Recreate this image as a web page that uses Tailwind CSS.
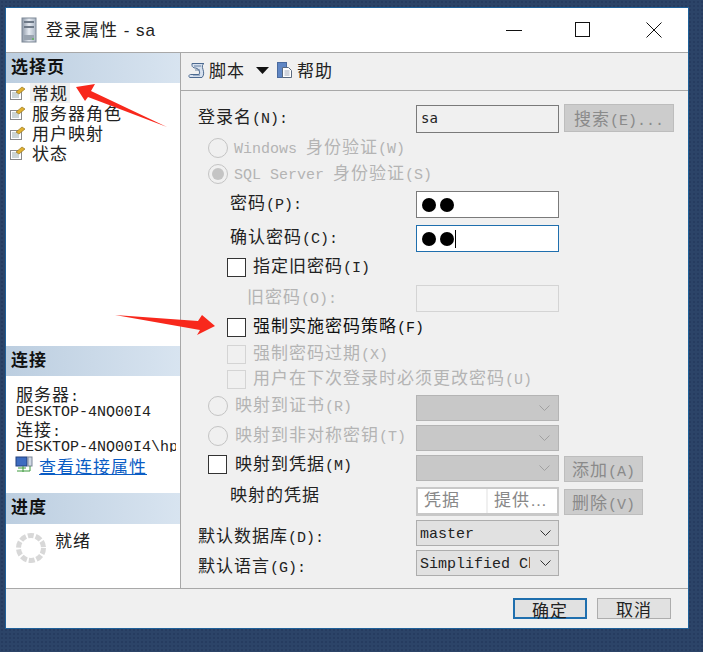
<!DOCTYPE html>
<html lang="zh-CN">
<head>
    <meta charset="UTF-8">
    <title>登录属性 - sa</title>
    <script src="https://cdn.jsdelivr.net/npm/@tailwindcss/browser@4"></script>
</head>
<body class="w-[703px] h-[652px] overflow-hidden bg-[#2c4468] bg-[radial-gradient(#263c60_1px,transparent_1px)] bg-[length:4px_4px] font-['Noto_Sans_CJK_SC',sans-serif] text-[17px] leading-[20px] tracking-[1px] text-[#1a1a1a]">

<div class="relative ml-[5px] mt-[7px] w-[684px] h-[622px] border border-[#1f6099] bg-[#f0f0f0] flex flex-col">

    <!-- title bar -->
    <div class="h-[45px] shrink-0 bg-white border-b border-[#a8a8a8] flex items-center">
        <svg class="ml-[15px] w-[16px] h-[26px]" viewBox="0 0 16 26">
            <defs><linearGradient id="srv" x1="0" x2="1" y1="0" y2="0"><stop offset="0" stop-color="#8e99a8"/><stop offset=".5" stop-color="#e6ebf2"/><stop offset="1" stop-color="#aab4c2"/></linearGradient></defs>
            <rect x="1" y="1" width="14" height="24" fill="url(#srv)" stroke="#7d8896"/>
            <rect x="3" y="4" width="10" height="2" fill="#6f7a88"/>
            <rect x="3" y="9" width="10" height="2" fill="#6f7a88"/>
            <rect x="3" y="18" width="10" height="5" fill="#9aa4b0"/>
            <rect x="11" y="21" width="2" height="2" fill="#6fb070"/>
        </svg>
        <span class="ml-[9px] text-[#222]">登录属性<span class="font-['Liberation_Sans']"> - sa</span></span>
        <div class="ml-auto flex items-center">
            <svg class="w-[16px] h-[16px] mr-[53px]" viewBox="0 0 16 16"><path d="M0 8.500H16" stroke="#111"/></svg>
            <svg class="w-[16px] h-[16px] mr-[55px]" viewBox="0 0 16 16"><rect x=".5" y=".5" width="14" height="14" fill="none" stroke="#111"/></svg>
            <svg class="w-[16px] h-[16px] mr-[26px]" viewBox="0 0 16 16"><path d="M.5.500L15.500 15.500M15.500.500L.5 15.500" stroke="#111"/></svg>
        </div>
    </div>

    <div class="flex-1 flex min-h-0">
        <!-- left panel -->
        <div class="w-[175px] shrink-0 bg-white border-r border-[#a8a8a8] flex flex-col">
            <div class="h-[30px] shrink-0 bg-gradient-to-r from-[#bccee0] to-[#d8e4f0] pl-[5px] pt-[3px] font-bold text-[#111]">选择页</div>
            <ul class="h-[263px] shrink-0 text-[#222]">
                <li class="h-[20px] flex items-center"><svg class="ml-[4px] w-[16px] h-[14px]" viewBox="0 0 16 14"><rect x=".5" y="4.500" width="11" height="9" fill="#fff" stroke="#8a8a8a"/><path d="M2 7h6M2 9h7M2 11h7" stroke="#9aa"/><path d="M6 6L12 1l3 2-6 5z" fill="#e0b030" stroke="#8a6a10" stroke-width=".6"/></svg><span class="ml-[4px] px-[2px] h-[20px] bg-[#f0f0f0] whitespace-nowrap">常规</span></li>
                <li class="h-[20px] flex items-center"><svg class="ml-[4px] w-[16px] h-[14px]" viewBox="0 0 16 14"><rect x=".5" y="4.500" width="11" height="9" fill="#fff" stroke="#8a8a8a"/><path d="M2 7h6M2 9h7M2 11h7" stroke="#9aa"/><path d="M6 6L12 1l3 2-6 5z" fill="#e0b030" stroke="#8a6a10" stroke-width=".6"/></svg><span class="ml-[6px]">服务器角色</span></li>
                <li class="h-[20px] flex items-center"><svg class="ml-[4px] w-[16px] h-[14px]" viewBox="0 0 16 14"><rect x=".5" y="4.500" width="11" height="9" fill="#fff" stroke="#8a8a8a"/><path d="M2 7h6M2 9h7M2 11h7" stroke="#9aa"/><path d="M6 6L12 1l3 2-6 5z" fill="#e0b030" stroke="#8a6a10" stroke-width=".6"/></svg><span class="ml-[6px]">用户映射</span></li>
                <li class="h-[20px] flex items-center"><svg class="ml-[4px] w-[16px] h-[14px]" viewBox="0 0 16 14"><rect x=".5" y="4.500" width="11" height="9" fill="#fff" stroke="#8a8a8a"/><path d="M2 7h6M2 9h7M2 11h7" stroke="#9aa"/><path d="M6 6L12 1l3 2-6 5z" fill="#e0b030" stroke="#8a6a10" stroke-width=".6"/></svg><span class="ml-[6px]">状态</span></li>
            </ul>
            <div class="h-[30px] shrink-0 bg-gradient-to-r from-[#bccee0] to-[#d8e4f0] pl-[5px] pt-[3px] font-bold text-[#111]">连接</div>
            <div class="h-[78px] shrink-0 pl-[10px] pt-[9px] text-[#222]">
                <div class="h-[17.500px] leading-[18px]">服务器<span class="font-['Liberation_Mono'] text-[15px] tracking-normal">:</span></div>
                <div class="h-[14px] mb-[3.500px] overflow-hidden font-['Liberation_Mono'] text-[15px] tracking-normal leading-[20px]">DESKTOP-4NQ00I4</div>
                <div class="h-[17.500px] leading-[18px]">连接<span class="font-['Liberation_Mono'] text-[15px] tracking-normal">:</span></div>
                <div class="h-[14px] w-[160px] overflow-hidden font-['Liberation_Mono'] text-[15px] tracking-normal leading-[20px] whitespace-nowrap">DESKTOP-4NQ00I4\hp</div>
            </div>
            <div class="h-[39px] shrink-0 flex items-start pt-[2px]">
                <svg class="ml-[9px] w-[18px] h-[17px]" viewBox="0 0 18 17"><rect x="1" y="1" width="11" height="9" fill="#3d6cc0" stroke="#23407e"/><rect x="13" y="1" width="4" height="9" fill="#d0d8e4" stroke="#7a8698"/><path d="M3 12h8M8 10v6M2 15h13M15 10v5" stroke="#3d9a3d" fill="none"/></svg>
                <a class="ml-[6px] text-[#0a5cc4] underline whitespace-nowrap">查看连接属性</a>
            </div>
            <div class="h-[31px] shrink-0 bg-gradient-to-r from-[#bccee0] to-[#d8e4f0] pl-[5px] pt-[3px] font-bold text-[#111]">进度</div>
            <div class="flex-1 flex items-start pl-[10px] pt-[6px] text-[#222]">
                <svg class="w-[30px] h-[30px] mt-[3px]" viewBox="0 0 30 30"><circle cx="15" cy="15" r="12.500" fill="none" stroke="#d8d8d8" stroke-width="5" stroke-dasharray="6 1.900"/></svg>
                <span class="ml-[9px]">就绪</span>
            </div>
        </div>

        <!-- right panel -->
        <div class="flex-1 flex flex-col min-w-0">
            <div class="h-[38px] shrink-0 border-b border-[#a8a8a8] flex items-center pl-[7px] pb-[3px] text-[#222]">
                <svg class="w-[17px] h-[17px]" viewBox="0 0 17 17"><path d="M4 1.500h12c-2 1-2 3-1 6s1 6-1 8H2c-1.500 0-1.500-3 .5-3H10c2 0 2-2 1-4S8 6 7 6 4 5 4 3.500z" fill="#d6e0ee" stroke="#4d6a90"/><path d="M6 4h7M7 8h5M5 13h7" stroke="#4d6a90" stroke-width=".8"/></svg>
                <span class="ml-[4px]">脚本</span>
                <svg class="ml-[11px] w-[13px] h-[7px]" viewBox="0 0 13 7"><path d="M0 0h13L6.500 7z" fill="#111"/></svg>
                <svg class="ml-[8px] w-[15px] h-[16px]" viewBox="0 0 15 16"><rect x=".5" y=".5" width="9" height="15" fill="#5f86c4" stroke="#4a6a9e"/><path d="M5.500 5.500h6l3 3v7h-9z" fill="#fff" stroke="#5a6a80"/><path d="M7.500 9h5M7.500 11h5M7.500 13h5" stroke="#8a96a8" stroke-width=".8"/></svg>
                <span class="ml-[5px]">帮助</span>
            </div>

            <!-- form: right panel starts at x=181, so a label at 198 is pl-[17px] -->
            <div class="flex-1 flex flex-col min-h-0 pt-[14px] pl-[17px] relative">
                <div class="h-[28px] flex items-start">
                    <span class="w-[218px] text-[#222] pt-[1px]">登录名<span class="font-['Liberation_Mono'] text-[15px] tracking-normal">(N):</span></span>
                    <div class="w-[143px] h-[28px] border border-[#7a7a7a] bg-[#f0f0f0] pl-[4px] font-['DejaVu_Sans_Mono'] text-[14px] tracking-normal leading-[24px] text-[#222]">sa</div>
                    <div class="ml-[5px] -mt-[1px] w-[110px] h-[28px] border border-[#bdbdbd] bg-[#cccccc] text-center text-[#8a8a8a] leading-[25px]">搜索<span class="font-['Liberation_Mono'] text-[15px] tracking-normal">(E)...</span></div>
                </div>

                <div class="h-[26px] mt-[2px] flex items-center text-[#b4b4b4]">
                    <span class="ml-[10px] w-[20px] h-[20px] rounded-full border border-[#c4c4c4] bg-[#f0f0f0]"></span>
                    <span class="ml-[6px]"><span class="font-['Liberation_Mono'] text-[15px] tracking-normal">Windows </span>身份验证<span class="font-['Liberation_Mono'] text-[15px] tracking-normal">(W)</span></span>
                </div>
                <div class="h-[26px] flex items-center text-[#b4b4b4]">
                    <span class="ml-[10px] w-[20px] h-[20px] rounded-full border border-[#c4c4c4] flex items-center justify-center"><span class="w-[12px] h-[12px] rounded-full bg-[#c4c4c4]"></span></span>
                    <span class="ml-[6px]"><span class="font-['Liberation_Mono'] text-[15px] tracking-normal">SQL Server </span>身份验证<span class="font-['Liberation_Mono'] text-[15px] tracking-normal">(S)</span></span>
                </div>

                <div class="h-[27px] mt-[4px] flex items-start">
                    <span class="ml-[32px] w-[186px] text-[#222] pt-[1px]">密码<span class="font-['Liberation_Mono'] text-[15px] tracking-normal">(P):</span></span>
                    <div class="w-[143px] h-[27px] border border-[#7a7a7a] bg-white pl-[5px] flex items-center gap-[4px]"><span class="w-[14px] h-[14px] rounded-full bg-black"></span><span class="w-[14px] h-[14px] rounded-full bg-black"></span></div>
                </div>
                <div class="h-[27px] mt-[7px] flex items-start">
                    <span class="ml-[32px] w-[186px] text-[#222] pt-[1px]">确认密码<span class="font-['Liberation_Mono'] text-[15px] tracking-normal">(C):</span></span>
                    <div class="w-[143px] h-[27px] border border-[#1f6fae] bg-white pl-[5px] flex items-center gap-[4px]"><span class="w-[14px] h-[14px] rounded-full bg-black"></span><span class="w-[14px] h-[14px] rounded-full bg-black"></span><span class="-ml-[3px] w-px h-[18px] bg-black"></span></div>
                </div>

                <div class="h-[20px] mt-[5px] flex items-center">
                    <span class="ml-[29px] w-[19px] h-[19px] border border-[#333] bg-white"></span>
                    <span class="ml-[7px] text-[#222]">指定旧密码<span class="font-['Liberation_Mono'] text-[15px] tracking-normal">(I)</span></span>
                </div>
                <div class="h-[27px] mt-[8px] flex items-start text-[#b4b4b4]">
                    <span class="ml-[49px] w-[169px] pt-[1px]">旧密码<span class="font-['Liberation_Mono'] text-[15px] tracking-normal">(O):</span></span>
                    <div class="w-[143px] h-[27px] border border-[#d4d4d4] bg-[#f0f0f0]"></div>
                </div>

                <div class="h-[20px] mt-[5px] flex items-center">
                    <span class="ml-[29px] w-[19px] h-[19px] border border-[#333] bg-white"></span>
                    <span class="ml-[7px] text-[#111] -mt-[1px]">强制实施密码策略<span class="font-['Liberation_Mono'] text-[15px] tracking-normal">(F)</span></span>
                </div>
                <div class="h-[20px] mt-[7px] flex items-center text-[#b4b4b4]">
                    <span class="ml-[29px] w-[19px] h-[19px] border border-[#d4d4d4]"></span>
                    <span class="ml-[7px]">强制密码过期<span class="font-['Liberation_Mono'] text-[15px] tracking-normal">(X)</span></span>
                </div>
                <div class="h-[20px] mt-[5px] flex items-center text-[#b4b4b4]">
                    <span class="ml-[29px] w-[19px] h-[19px] border border-[#d4d4d4]"></span>
                    <span class="ml-[7px]">用户在下次登录时必须更改密码<span class="font-['Liberation_Mono'] text-[15px] tracking-normal">(U)</span></span>
                </div>

                <div class="h-[26px] mt-[6px] flex items-start text-[#b4b4b4]">
                    <span class="ml-[10px] mt-[1px] w-[20px] h-[20px] rounded-full border border-[#c4c4c4]"></span>
                    <span class="ml-[7px] -mt-[1px] w-[181px]">映射到证书<span class="font-['Liberation_Mono'] text-[15px] tracking-normal">(R)</span></span>
                    <div class="w-[143px] h-[26px] border border-[#b4b4b4] bg-[#c8c8c8] flex items-center justify-end pr-[8px]"><svg class="w-[11px] h-[6px]" viewBox="0 0 11 6"><path d="M.5.500L5.500 5.500 10.500.5" fill="none" stroke="#a0a0a0"/></svg></div>
                </div>
                <div class="h-[26px] mt-[4px] flex items-start text-[#b4b4b4]">
                    <span class="ml-[10px] mt-[1px] w-[20px] h-[20px] rounded-full border border-[#c4c4c4]"></span>
                    <span class="ml-[7px] -mt-[1px] w-[181px]">映射到非对称密钥<span class="font-['Liberation_Mono'] text-[15px] tracking-normal">(T)</span></span>
                    <div class="w-[143px] h-[26px] border border-[#b4b4b4] bg-[#c8c8c8] flex items-center justify-end pr-[8px]"><svg class="w-[11px] h-[6px]" viewBox="0 0 11 6"><path d="M.5.500L5.500 5.500 10.500.5" fill="none" stroke="#a0a0a0"/></svg></div>
                </div>
                <div class="h-[26px] mt-[4px] flex items-start">
                    <span class="ml-[10px] w-[19px] h-[19px] border border-[#333] bg-white"></span>
                    <span class="ml-[8px] -mt-[2px] w-[181px] text-[#222]">映射到凭据<span class="font-['Liberation_Mono'] text-[15px] tracking-normal">(M)</span></span>
                    <div class="w-[143px] h-[26px] border border-[#b4b4b4] bg-[#c8c8c8] flex items-center justify-end pr-[8px]"><svg class="w-[11px] h-[6px]" viewBox="0 0 11 6"><path d="M.5.500L5.500 5.500 10.500.5" fill="none" stroke="#a0a0a0"/></svg></div>
                    <div class="ml-[5px] mt-[1px] w-[79px] h-[26px] border border-[#bdbdbd] bg-[#cccccc] text-center text-[#8a8a8a] leading-[23px]">添加<span class="font-['Liberation_Mono'] text-[15px] tracking-normal">(A)</span></div>
                </div>
                <div class="h-[29px] mt-[6px] flex items-start">
                    <span class="ml-[32px] -mt-[1px] w-[186px] text-[#222] leading-[16px]">映射的凭据</span>
                    <div class="w-[143px] h-[29px] border-2 border-[#c8c8c8] border-b-[3px] bg-white flex text-[#888] leading-[20px]">
                        <span class="w-[70px] pl-[6px] border-r-2 border-[#f0f0f0]">凭据</span>
                        <span class="pl-[6px] whitespace-nowrap">提供<span class="font-['Liberation_Sans'] tracking-normal">…</span></span>
                    </div>
                    <div class="ml-[5px] mt-[2px] w-[79px] h-[26px] border border-[#bdbdbd] bg-[#cccccc] text-center text-[#8a8a8a] leading-[23px]">删除<span class="font-['Liberation_Mono'] text-[15px] tracking-normal">(V)</span></div>
                </div>
                <div class="h-[26px] mt-[4px] flex items-center">
                    <span class="w-[218px] text-[#222] pt-[8px]">默认数据库<span class="font-['Liberation_Mono'] text-[15px] tracking-normal">(D):</span></span>
                    <div class="w-[143px] h-[26px] border border-[#adadad] bg-[#e1e1e1] flex items-center pl-[3px] pr-[7px] justify-between font-['Liberation_Mono'] text-[15px] tracking-normal text-[#222]"><span class="pt-[4px]">master</span><svg class="w-[11px] h-[6px]" viewBox="0 0 11 6"><path d="M.5.500L5.500 5.500 10.500.5" fill="none" stroke="#333"/></svg></div>
                </div>
                <div class="h-[26px] mt-[4px] flex items-center">
                    <span class="w-[218px] text-[#222] pt-[8px]">默认语言<span class="font-['Liberation_Mono'] text-[15px] tracking-normal">(G):</span></span>
                    <div class="w-[143px] h-[26px] border border-[#adadad] bg-[#e1e1e1] flex items-center pl-[3px] pr-[7px] justify-between font-['Liberation_Mono'] text-[15px] tracking-normal text-[#222]"><span class="w-[110px] pt-[4px] overflow-hidden whitespace-nowrap">Simplified Chinese</span><svg class="shrink-0 w-[11px] h-[6px]" viewBox="0 0 11 6"><path d="M.5.500L5.500 5.500 10.500.5" fill="none" stroke="#333"/></svg></div>
                </div>
            </div>
        </div>
    </div>

    <!-- footer buttons -->
    <div class="h-[40px] shrink-0 border-t border-[#a8a8a8] flex items-start justify-end pt-[9px] pr-[17px] gap-[10px] text-[#222]">
        <div class="w-[74px] h-[21px] border-2 border-[#1f6fae] bg-[#e1e1e1] text-center leading-[19px]">确定</div>
        <div class="w-[74px] h-[21px] border border-[#adadad] bg-[#e1e1e1] text-center leading-[20px]">取消</div>
    </div>

    <!-- red annotation arrows -->
    <svg class="absolute left-[-6px] top-[-8px] w-[703px] h-[652px] pointer-events-none" viewBox="0 0 703 652">
        <path d="M76 87L95 84L91 91L167 127L88 97L85 101Z" fill="#f8281c"/>
        <path d="M215 326L202 315L198 321L115 315L200 330L197 335Z" fill="#f8281c"/>
    </svg>
</div>
</body>
</html>
